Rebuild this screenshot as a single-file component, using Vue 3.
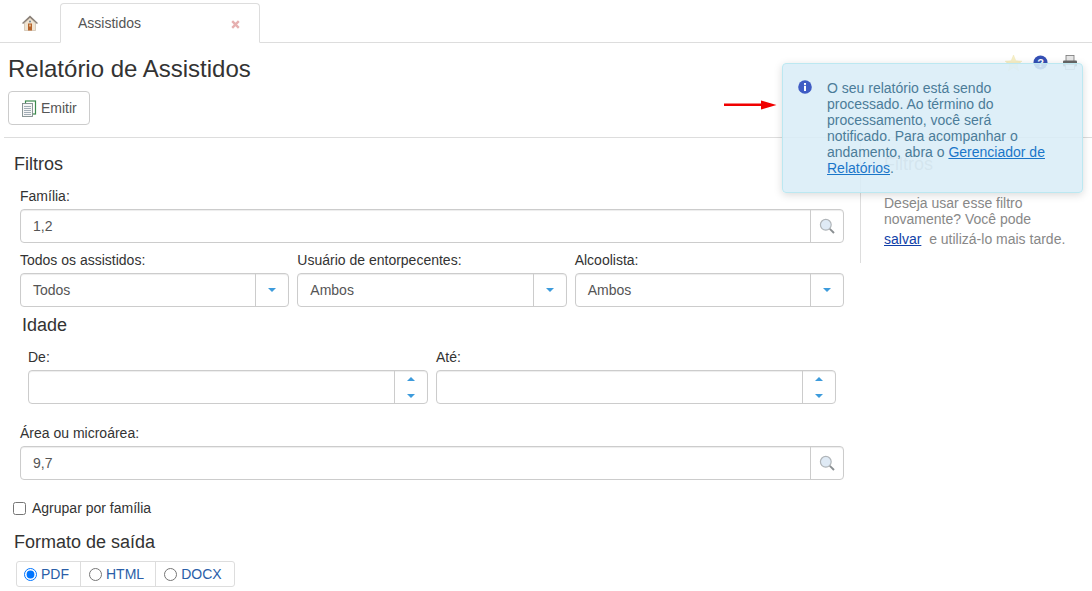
<template>
  <div class="page">
    <!-- abas -->
    <div class="tabs">
      <div class="tab-home">
        <svg width="18" height="18" viewBox="0 0 18 18">
          <path d="M.8 9.2 L9 1.5 L17.2 9.2 L15.5 9.8 L9 4 L2.5 9.8 Z" fill="#8a8078" />
          <path d="M3.5 9 L9 4.2 L14.5 9 V16.5 H3.5 Z" fill="#efe4d2" stroke="#c4b49c" stroke-width=".6" />
          <rect x="7" y="9.5" width="4" height="7" fill="#b5622a" />
          <circle cx="9" cy="7.5" r="1" fill="#6f8296" />
          <rect x="8.3" y="10.5" width="1.4" height="2" fill="#f0d9b0" />
        </svg>
      </div>
      <div class="tab">
        <span>Assistidos</span>
        <svg class="tab-close" width="9" height="9" viewBox="0 0 9 9">
          <path d="M1.2 1.2 L7.8 7.8 M7.8 1.2 L1.2 7.8" stroke="#e6b0b0" stroke-width="2.4" />
        </svg>
      </div>
    </div>

    <div class="head">
      <h1>Relatório de Assistidos</h1>
      <div class="head-icons">
        <svg width="19" height="18" viewBox="0 0 18 18">
          <path d="M9 1 L11.3 6.8 L17.4 7.2 L12.7 11 L14.2 17 L9 13.7 L3.8 17 L5.3 11 L.6 7.2 L6.7 6.8 Z" fill="#f8f0c6" stroke="#efe6b8" stroke-width=".5" />
        </svg>
        <svg class="help" width="15" height="15" viewBox="0 0 15 15">
          <circle cx="7.5" cy="7.5" r="7" fill="#3550b5" />
          <text x="7.5" y="11.5" text-anchor="middle" class="help-mark">?</text>
        </svg>
        <svg width="16" height="17" viewBox="0 0 16 16">
          <rect x="4" y="1" width="8" height="6" fill="#e6e6e6" stroke="#777" stroke-width=".8" />
          <rect x="1" y="6" width="14" height="6" rx="1" fill="#666" />
          <rect x="3.5" y="10" width="9" height="5" fill="#f2f2f2" stroke="#888" stroke-width=".7" />
        </svg>
      </div>
    </div>

    <div class="toolbar">
      <button class="btn">
        <svg width="16" height="17" viewBox="0 0 16 17">
          <rect x="4.5" y="1" width="10" height="13" fill="#fff" stroke="#3d8a4e" stroke-width="1.2" />
          <rect x="1.5" y="3.5" width="10" height="13" fill="#f6f6f6" stroke="#7d8a8a" stroke-width=".9" />
          <path d="M3 6.5 H10 M3 8.5 H10 M3 10.5 H10 M3 12.5 H10 M3 14.5 H10" stroke="#8d9aa6" stroke-width=".8" />
        </svg>
        Emitir
      </button>
    </div>

    <div class="content">
      <div class="main">
        <h4 class="sec-filtros">Filtros</h4>

        <div class="field">
          <label>Família:</label>
          <div class="group">
            <div class="value">1,2</div>
            <div class="addon">
              <svg width="16" height="16" viewBox="0 0 16 16">
                <circle cx="6.8" cy="6.8" r="5.4" fill="#dfeaf5" stroke="#b0b5b9" stroke-width="1.2" />
                <path d="M10.8 10.8 L15 15" stroke="#8a8f92" stroke-width="1.9" />
              </svg>
            </div>
          </div>
        </div>

        <div class="row-3">
          <div v-for="s in selects" :key="s.label" class="field">
            <label>{{ s.label }}</label>
            <div class="group">
              <div class="value">{{ s.value }}</div>
              <div class="addon">
                <span class="caret-down"></span>
              </div>
            </div>
          </div>
        </div>

        <h4 class="sec-idade">Idade</h4>
        <div class="row-2">
          <div v-for="n in ['De:', 'Até:']" :key="n" class="field">
            <label>{{ n }}</label>
            <div class="group">
              <div class="value"></div>
              <div class="addon spin">
                <span class="caret-up"></span>
                <span class="caret-down"></span>
              </div>
            </div>
          </div>
        </div>

        <div class="field area">
          <label>Área ou microárea:</label>
          <div class="group">
            <div class="value">9,7</div>
            <div class="addon">
              <svg width="16" height="16" viewBox="0 0 16 16">
                <circle cx="6.8" cy="6.8" r="5.4" fill="#dfeaf5" stroke="#b0b5b9" stroke-width="1.2" />
                <path d="M10.8 10.8 L15 15" stroke="#8a8f92" stroke-width="1.9" />
              </svg>
            </div>
          </div>
        </div>

        <label class="check">
          <input type="checkbox" />
          <span>Agrupar por família</span>
        </label>

        <h4 class="sec-formato">Formato de saída</h4>
        <div class="radios">
          <label v-for="f in formatos" :key="f" class="radio">
            <input type="radio" name="formato" :value="f" v-model="formato" />
            <span>{{ f }}</span>
          </label>
        </div>
      </div>

      <div class="side">
        <h4>Filtros</h4>
        <p>Deseja usar esse filtro novamente? Você pode</p>
        <p class="save"><a href="#">salvar</a>&nbsp; e utilizá-lo mais tarde.</p>
      </div>
    </div>

    <!-- seta e aviso ficam sobre a página -->
    <svg class="arrow" width="54" height="10" viewBox="0 0 54 10">
      <path d="M0 3.4 H37 V0.5 L52.5 5 L37 9.5 V6 H0 Z" fill="#f00000" />
    </svg>
    <div class="toast">
      <svg class="toast-icon" width="14" height="14" viewBox="0 0 14 14">
        <circle cx="7" cy="7" r="6.8" fill="#3f5cc4" />
        <rect x="6" y="5.8" width="2" height="5.2" fill="#fff" />
        <rect x="6" y="3" width="2" height="1.9" fill="#fff" />
      </svg>
      <div class="toast-text">
        O seu relatório está sendo processado. Ao término do processamento, você será notificado. Para acompanhar o andamento, abra o <a href="#">Gerenciador de Relatórios</a>.
      </div>
    </div>
  </div>
</template>

<script setup>
import { ref } from 'vue'

const selects = [
  { label: 'Todos os assistidos:', value: 'Todos' },
  { label: 'Usuário de entorpecentes:', value: 'Ambos' },
  { label: 'Alcoolista:', value: 'Ambos' }
]
const formatos = ['PDF', 'HTML', 'DOCX']
const formato = ref('PDF')
</script>

<style>
html, body {
  margin: 0;
  background: #fff;
}
</style>

<style scoped>
.page {
  position: relative;
  width: 1092px;
  height: 591px;
  overflow: hidden;
  font-family: "Liberation Sans", Arial, sans-serif;
  font-size: 14px;
  line-height: 20px;
  color: #333;
}
.tabs {
  display: flex;
  height: 43px;
  box-sizing: border-box;
  border-bottom: 1px solid #ddd;
}
.tab-home {
  width: 60px;
  display: flex;
  justify-content: center;
  padding-top: 14px;
  box-sizing: border-box;
}
.tab {
  width: 200px;
  height: 40px;
  margin-top: 3px;
  box-sizing: border-box;
  display: flex;
  align-items: center;
  justify-content: space-between;
  padding: 0 19px 0 17px;
  background: #fff;
  border: 1px solid #ddd;
  border-bottom-color: #fff;
  border-radius: 4px 4px 0 0;
  color: #555;
}
.tab-close {
  margin-top: 2px;
}
.head {
  display: flex;
  justify-content: space-between;
  padding: 11px 14px 0 8px;
  height: 48px;
  box-sizing: border-box;
}
h1 {
  margin: 0;
  font-size: 24px;
  line-height: 30px;
  font-weight: 400;
}
.head-icons {
  display: flex;
  align-items: flex-start;
  gap: 12px;
  margin-top: 0;
}
.help {
  margin: 1px 2px 0 -2px;
}
.help-mark {
  font: bold 11px "Liberation Sans", sans-serif;
  fill: #fff;
}
.toolbar {
  padding-left: 8px;
  height: 46px;
}
.btn {
  display: flex;
  align-items: center;
  gap: 4px;
  width: 82px;
  height: 34px;
  padding: 0 0 0 12px;
  box-sizing: border-box;
  background: #fff;
  border: 1px solid #ccc;
  border-radius: 4px;
  font: inherit;
  color: #555;
}
.content {
  display: flex;
  margin-left: 4px;
  border-top: 1px solid #ddd;
}
.main {
  width: 856px;
  box-sizing: border-box;
  padding: 16px 16px 0 10px;
}
h4 {
  margin: 0;
  font-size: 18px;
  line-height: 20px;
  font-weight: 400;
}
.field {
  display: flex;
  flex-direction: column;
  min-width: 0;
  flex: 1;
}
.main > .field {
  margin-left: 6px;
  margin-top: 12px;
}
label {
  display: block;
  line-height: 20px;
  margin-bottom: 3px;
}
.group {
  display: flex;
  height: 34px;
  box-sizing: border-box;
  border: 1px solid #ccc;
  border-radius: 4px;
  box-shadow: inset 0 1px 1px rgba(0, 0, 0, .075);
  background: #fff;
}
.value {
  flex: 1;
  padding: 6px 12px;
  color: #555;
}
.addon {
  width: 33px;
  box-sizing: border-box;
  border-left: 1px solid #ccc;
  display: flex;
  align-items: center;
  justify-content: center;
}
.spin {
  flex-direction: column;
  gap: 13px;
}
.caret-down,
.caret-up {
  width: 0;
  height: 0;
  border-left: 4px solid transparent;
  border-right: 4px solid transparent;
}
.caret-down {
  border-top: 4px solid #3d9bdc;
}
.caret-up {
  border-bottom: 4px solid #3d9bdc;
}
.row-3 {
  display: flex;
  gap: 8px;
  margin: 7px 0 0 6px;
}
.sec-idade {
  margin: 8px 0 0 8px;
}
.row-2 {
  display: flex;
  gap: 8px;
  margin: 12px 8px 0 14px;
}
.main > .area {
  margin-top: 19px;
}
.check {
  display: flex;
  align-items: center;
  margin: 18px 0 0 0;
  height: 20px;
}
.check input {
  width: 13px;
  height: 13px;
  margin: 0 6px 0 -1px;
}
.sec-formato {
  margin-top: 14px;
}
.radios {
  display: inline-flex;
  height: 26px;
  margin: 9px 0 0 2px;
  box-sizing: border-box;
  border: 1px solid #ddd;
  border-radius: 3px;
  color: #2a5ea8;
}
.radio {
  display: flex;
  align-items: center;
  margin: 0;
  padding: 0 11px 0 8px;
  border-left: 1px solid #ddd;
}
.radio:first-child {
  border-left: 0;
  padding-left: 7px;
}
.radio input {
  width: 13px;
  height: 13px;
  margin: 0 4px 0 0;
}
.radio:last-child {
  padding-right: 12px;
}
.side {
  width: 232px;
  height: 125px;
  box-sizing: border-box;
  border-left: 1px solid #ddd;
  padding: 16px 0 0 23px;
  color: #888;
}
.side h4 {
  color: #aaa;
  margin-bottom: 21px;
}
.side p {
  margin: 0;
  line-height: 16px;
  width: 180px;
}
.side .save {
  width: auto;
  margin-top: 2px;
  line-height: 20px;
}
.side a {
  color: #0f3fa8;
}
.arrow {
  position: absolute;
  left: 724px;
  top: 100px;
}
.toast {
  position: absolute;
  left: 782px;
  top: 63px;
  width: 301px;
  height: 130px;
  box-sizing: border-box;
  padding: 16px 32px 0 44px;
  background: rgba(217, 237, 247, .88);
  border: 1px solid #bce8f1;
  border-radius: 4px;
  box-shadow: 0 2px 8px rgba(0, 0, 0, .15);
  color: #4b7c99;
  line-height: 16px;
}
.toast-icon {
  position: absolute;
  left: 15px;
  top: 16px;
}
.toast a {
  color: #1a76c9;
}
</style>
